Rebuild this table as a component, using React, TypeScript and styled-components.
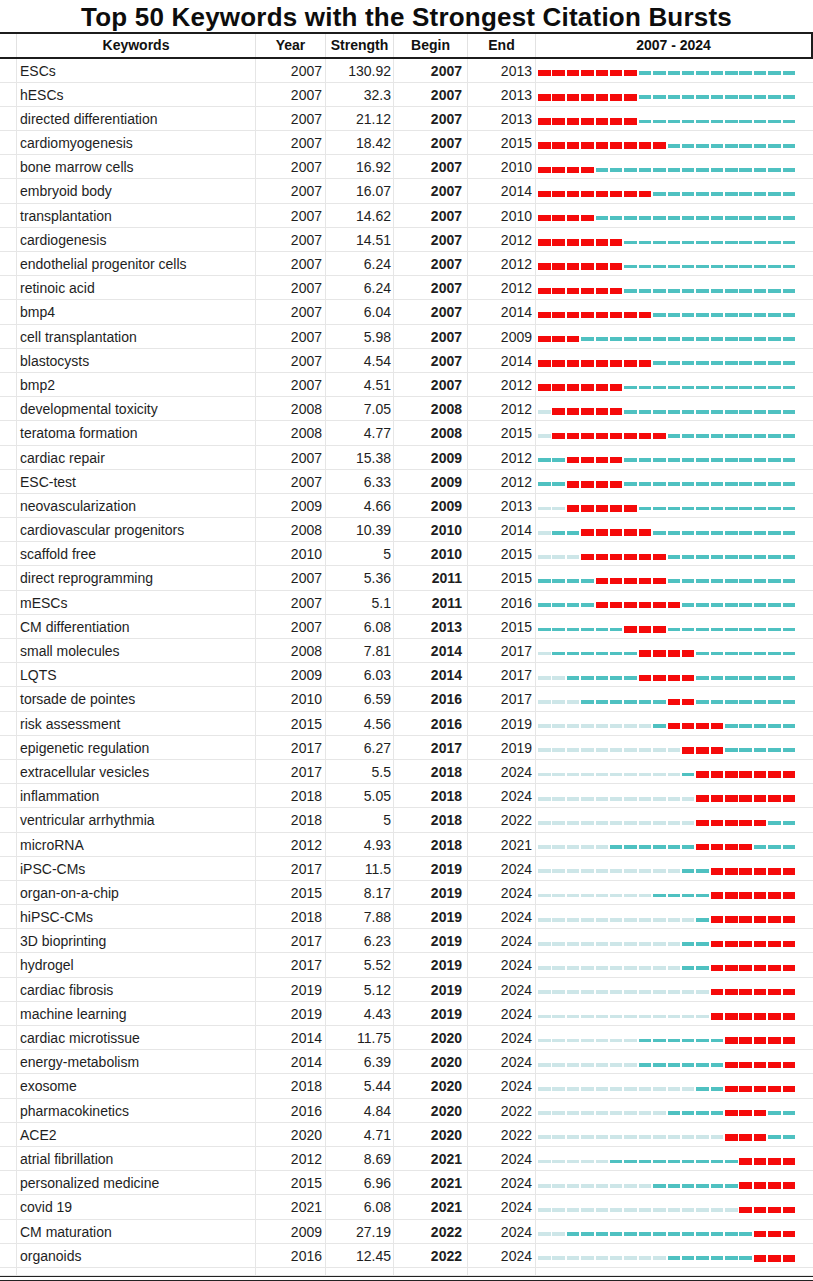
import React from "react";
import styled, { createGlobalStyle } from "styled-components";

const GlobalStyle = createGlobalStyle`
  html, body { margin: 0; padding: 0; background: #ffffff; }
  body { font-family: "Liberation Sans", Arial, sans-serif; color: #1a1a1a; }
`;

type Row = [string, number, string, number, number];

const DATA: Row[] = [
  ["ESCs", 2007, "130.92", 2007, 2013],
  ["hESCs", 2007, "32.3", 2007, 2013],
  ["directed differentiation", 2007, "21.12", 2007, 2013],
  ["cardiomyogenesis", 2007, "18.42", 2007, 2015],
  ["bone marrow cells", 2007, "16.92", 2007, 2010],
  ["embryoid body", 2007, "16.07", 2007, 2014],
  ["transplantation", 2007, "14.62", 2007, 2010],
  ["cardiogenesis", 2007, "14.51", 2007, 2012],
  ["endothelial progenitor cells", 2007, "6.24", 2007, 2012],
  ["retinoic acid", 2007, "6.24", 2007, 2012],
  ["bmp4", 2007, "6.04", 2007, 2014],
  ["cell transplantation", 2007, "5.98", 2007, 2009],
  ["blastocysts", 2007, "4.54", 2007, 2014],
  ["bmp2", 2007, "4.51", 2007, 2012],
  ["developmental toxicity", 2008, "7.05", 2008, 2012],
  ["teratoma formation", 2008, "4.77", 2008, 2015],
  ["cardiac repair", 2007, "15.38", 2009, 2012],
  ["ESC-test", 2007, "6.33", 2009, 2012],
  ["neovascularization", 2009, "4.66", 2009, 2013],
  ["cardiovascular progenitors", 2008, "10.39", 2010, 2014],
  ["scaffold free", 2010, "5", 2010, 2015],
  ["direct reprogramming", 2007, "5.36", 2011, 2015],
  ["mESCs", 2007, "5.1", 2011, 2016],
  ["CM differentiation", 2007, "6.08", 2013, 2015],
  ["small molecules", 2008, "7.81", 2014, 2017],
  ["LQTS", 2009, "6.03", 2014, 2017],
  ["torsade de pointes", 2010, "6.59", 2016, 2017],
  ["risk assessment", 2015, "4.56", 2016, 2019],
  ["epigenetic regulation", 2017, "6.27", 2017, 2019],
  ["extracellular vesicles", 2017, "5.5", 2018, 2024],
  ["inflammation", 2018, "5.05", 2018, 2024],
  ["ventricular arrhythmia", 2018, "5", 2018, 2022],
  ["microRNA", 2012, "4.93", 2018, 2021],
  ["iPSC-CMs", 2017, "11.5", 2019, 2024],
  ["organ-on-a-chip", 2015, "8.17", 2019, 2024],
  ["hiPSC-CMs", 2018, "7.88", 2019, 2024],
  ["3D bioprinting", 2017, "6.23", 2019, 2024],
  ["hydrogel", 2017, "5.52", 2019, 2024],
  ["cardiac fibrosis", 2019, "5.12", 2019, 2024],
  ["machine learning", 2019, "4.43", 2019, 2024],
  ["cardiac microtissue", 2014, "11.75", 2020, 2024],
  ["energy-metabolism", 2014, "6.39", 2020, 2024],
  ["exosome", 2018, "5.44", 2020, 2024],
  ["pharmacokinetics", 2016, "4.84", 2020, 2022],
  ["ACE2", 2020, "4.71", 2020, 2022],
  ["atrial fibrillation", 2012, "8.69", 2021, 2024],
  ["personalized medicine", 2015, "6.96", 2021, 2024],
  ["covid 19", 2021, "6.08", 2021, 2024],
  ["CM maturation", 2009, "27.19", 2022, 2024],
  ["organoids", 2016, "12.45", 2022, 2024],
];

const YEARS = Array.from({ length: 18 }, (_, i) => 2007 + i);

const COLS = "16px 239px 70px 68px 74px 68px 1fr";

const Page = styled.div`
  width: 813px;
  height: 1281px;
  overflow: hidden;
  background: #fff;
`;

const Title = styled.h1`
  margin: 0;
  height: 32px;
  font-size: 26px;
  font-weight: 700;
  line-height: 35px;
  text-align: center;
  color: #0d0d0d;
  letter-spacing: 0.2px;
`;

const Table = styled.div`
  border-top: 2px solid #1c1c1c;
`;

const Header = styled.div`
  display: grid;
  grid-template-columns: ${COLS};
  height: 22.5px;
  border-bottom: 2px solid #1c1c1c;
  border-right: 2px solid #1c1c1c;
`;

const HeadCell = styled.div`
  font-size: 14px;
  font-weight: 700;
  line-height: 22.5px;
  text-align: center;
  color: #111;
  border-left: 1px solid #e2e2e2;
  &:first-child { border-left: none; }
`;

const BodyRow = styled.div<{ $h?: number }>`
  display: grid;
  grid-template-columns: ${COLS};
  height: ${(p) => p.$h ?? 24.2}px;
  box-sizing: border-box;
  border-bottom: 1px solid #e6e6e6;
`;

const Cell = styled.div<{ $align?: "left" | "right"; $bold?: boolean; $pad?: number }>`
  font-size: 14px;
  line-height: 24px;
  white-space: nowrap;
  overflow: hidden;
  color: #1e1e1e;
  text-align: ${(p) => p.$align ?? "left"};
  font-weight: ${(p) => (p.$bold ? 700 : 400)};
  padding: ${(p) => (p.$align === "right" ? `0 ${p.$pad ?? 3}px 0 0` : "0 0 0 3px")};
  border-left: 1px solid #e6e6e6;
  &:first-child { border-left: none; }
`;

const Chart = styled.div`
  display: flex;
  align-items: center;
  gap: 1.9px;
  padding: 6px 0 0 2px;
  border-left: 1px solid #e6e6e6;
`;

const Seg = styled.div<{ $kind: "pale" | "teal" | "red" }>`
  flex: 0 0 12.5px;
  height: ${(p) => (p.$kind === "red" ? 6.5 : 3.8)}px;
  background: ${(p) =>
    p.$kind === "red" ? "#f50a0a" : p.$kind === "teal" ? "#4fc1c1" : "#cde6e8"};
`;

const Footer = styled.div`
  height: 3px;
  border-top: 1.5px solid #222;
  border-bottom: 1.5px solid #222;
`;

export default function App() {
  return (
    <Page>
      <GlobalStyle />
      <Title>Top 50 Keywords with the Strongest Citation Bursts</Title>
      <Table>
        <Header>
          <HeadCell />
          <HeadCell>Keywords</HeadCell>
          <HeadCell>Year</HeadCell>
          <HeadCell>Strength</HeadCell>
          <HeadCell>Begin</HeadCell>
          <HeadCell>End</HeadCell>
          <HeadCell>2007 - 2024</HeadCell>
        </Header>
        {DATA.map(([kw, year, strength, begin, end]) => (
          <BodyRow key={kw}>
            <Cell />
            <Cell>{kw}</Cell>
            <Cell $align="right">{year}</Cell>
            <Cell $align="right" $pad={2}>{strength}</Cell>
            <Cell $align="right" $bold $pad={5}>{begin}</Cell>
            <Cell $align="right">{end}</Cell>
            <Chart>
              {YEARS.map((y) => (
                <Seg
                  key={y}
                  $kind={y >= begin && y <= end ? "red" : y >= year ? "teal" : "pale"}
                />
              ))}
            </Chart>
          </BodyRow>
        ))}
        <BodyRow $h={8.5}>
          <Cell />
          <Cell />
          <Cell />
          <Cell />
          <Cell />
          <Cell />
          <Cell />
        </BodyRow>
        <Footer />
      </Table>
    </Page>
  );
}
